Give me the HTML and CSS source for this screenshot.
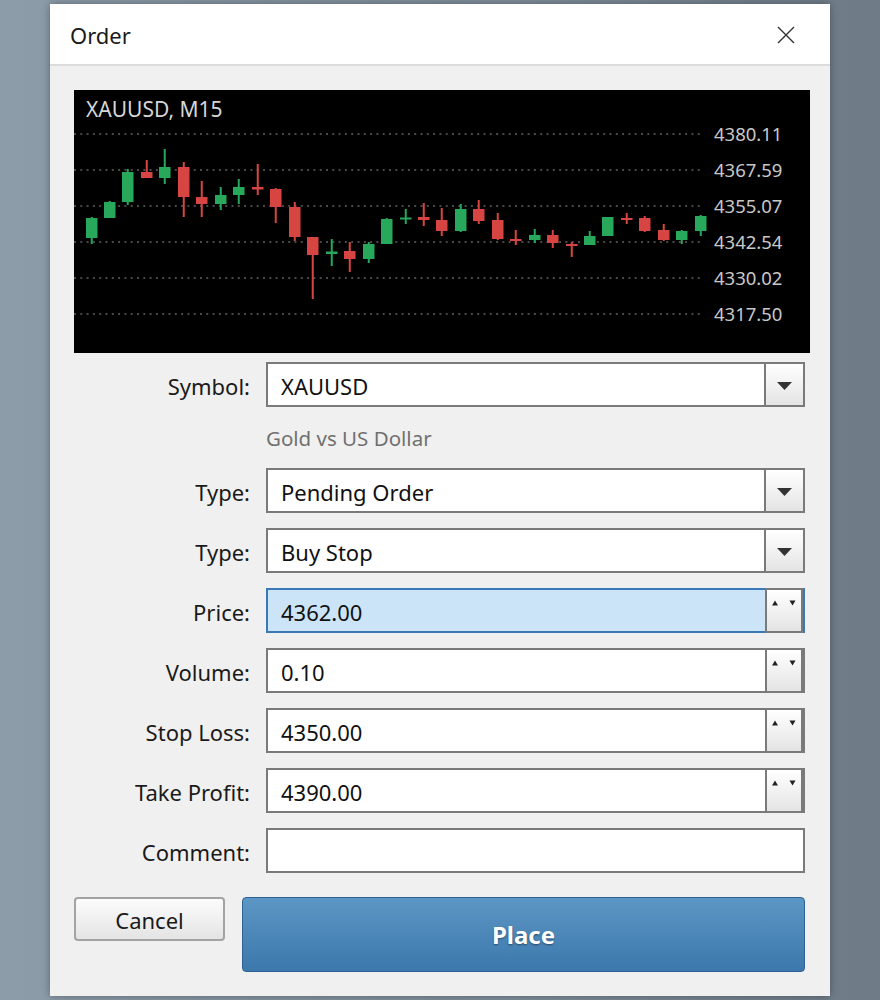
FILE: index.html
```html
<!DOCTYPE html>
<html>
<head>
<meta charset="utf-8">
<title>Order</title>
<link rel="stylesheet" href="styles.css">
</head>
<body>
<div class="dialog">
  <div class="titlebar">
    <span class="title">Order</span>
    <svg class="close" width="18" height="18" viewBox="0 0 18 18"><path d="M1 1L17 17M17 1L1 17" stroke="#333" stroke-width="1.4" fill="none"/></svg>
  </div>
  <div class="content">
    <div class="chart">
      <span class="chart-title">XAUUSD, M15</span>
      <svg class="chart-svg" width="736" height="263" viewBox="0 0 736 263">
        <g class="grid" stroke="#4a4a4a" stroke-width="2" stroke-dasharray="2 4.3">
          <line x1="0" y1="44" x2="628" y2="44"/>
          <line x1="0" y1="80" x2="628" y2="80"/>
          <line x1="0" y1="116" x2="628" y2="116"/>
          <line x1="0" y1="152" x2="628" y2="152"/>
          <line x1="0" y1="188" x2="628" y2="188"/>
          <line x1="0" y1="224" x2="628" y2="224"/>
        </g>
        <g class="labels" fill="#c8c8c8" font-size="18.5">
          <text x="640" y="50.5">4380.11</text>
          <text x="640" y="86.5">4367.59</text>
          <text x="640" y="122.5">4355.07</text>
          <text x="640" y="158.5">4342.54</text>
          <text x="640" y="194.5">4330.02</text>
          <text x="640" y="230.5">4317.50</text>
        </g>
        <g fill="#27a85a">
          <rect x="16.75" y="127" width="2" height="27"/><rect x="12" y="128" width="11.5" height="20"/>
          <rect x="34.75" y="111" width="2" height="17"/><rect x="30" y="112" width="11.5" height="16"/>
          <rect x="52.75" y="79" width="2" height="36"/><rect x="48" y="82" width="11.5" height="30"/>
          <rect x="89.75" y="59" width="2" height="35"/><rect x="85" y="77" width="11.5" height="11"/>
          <rect x="145.75" y="97" width="2" height="23"/><rect x="141" y="105" width="11.5" height="9"/>
          <rect x="163.75" y="89" width="2" height="25"/><rect x="159" y="97" width="11.5" height="8"/>
          <rect x="256.75" y="149" width="2" height="27"/><rect x="252" y="161.5" width="11.5" height="2.5"/>
          <rect x="293.75" y="152" width="2" height="21"/><rect x="289" y="154" width="11.5" height="15"/>
          <rect x="311.75" y="128" width="2" height="26"/><rect x="307" y="129" width="11.5" height="25"/>
          <rect x="330.75" y="119" width="2" height="15"/><rect x="326" y="127.5" width="11.5" height="2"/>
          <rect x="385.75" y="114" width="2" height="28"/><rect x="381" y="119" width="11.5" height="22"/>
          <rect x="459.75" y="139" width="2" height="14"/><rect x="455" y="145" width="11.5" height="5"/>
          <rect x="514.75" y="141" width="2" height="14"/><rect x="510" y="146" width="11.5" height="9"/>
          <rect x="532.75" y="127" width="2" height="19"/><rect x="528" y="127" width="11.5" height="19"/>
          <rect x="606.75" y="140" width="2" height="14"/><rect x="602" y="141" width="11.5" height="9"/>
          <rect x="625.75" y="125" width="2" height="21"/><rect x="621" y="126" width="11.5" height="15"/>
        </g>
        <g fill="#d64541">
          <rect x="71.75" y="70" width="2" height="18"/><rect x="67" y="82" width="11.5" height="6"/>
          <rect x="108.75" y="72" width="2" height="55"/><rect x="104" y="77" width="11.5" height="30"/>
          <rect x="126.75" y="91" width="2" height="36"/><rect x="122" y="107" width="11.5" height="7"/>
          <rect x="182.75" y="74" width="2" height="31"/><rect x="178" y="97" width="11.5" height="2.5"/>
          <rect x="200.75" y="98" width="2" height="35"/><rect x="196" y="99" width="11.5" height="18"/>
          <rect x="219.75" y="112" width="2" height="39"/><rect x="215" y="117" width="11.5" height="30"/>
          <rect x="237.75" y="147" width="2" height="62"/><rect x="233" y="147" width="11.5" height="18"/>
          <rect x="274.75" y="152" width="2" height="30"/><rect x="270" y="161" width="11.5" height="8"/>
          <rect x="348.75" y="113" width="2" height="23"/><rect x="344" y="127" width="11.5" height="3"/>
          <rect x="366.75" y="118" width="2" height="28"/><rect x="362" y="130" width="11.5" height="11"/>
          <rect x="403.75" y="110" width="2" height="24"/><rect x="399" y="119" width="11.5" height="12"/>
          <rect x="422.75" y="123" width="2" height="27"/><rect x="418" y="130" width="11.5" height="19"/>
          <rect x="440.75" y="140" width="2" height="15"/><rect x="436" y="149" width="11.5" height="2"/>
          <rect x="477.75" y="140" width="2" height="18"/><rect x="473" y="145" width="11.5" height="8"/>
          <rect x="496.75" y="152" width="2" height="15"/><rect x="492" y="154" width="11.5" height="2"/>
          <rect x="551.75" y="123" width="2" height="11"/><rect x="547" y="128" width="11.5" height="2"/>
          <rect x="569.75" y="126" width="2" height="16"/><rect x="565" y="128" width="11.5" height="13"/>
          <rect x="588.75" y="134" width="2" height="17"/><rect x="584" y="140" width="11.5" height="10"/>
        </g>
      </svg>
    </div>

    <div class="form">
      <label class="label">Symbol:</label>
      <div class="field"><span class="value">XAUUSD</span><span class="dd"><svg width="15" height="8" viewBox="0 0 15 8"><path d="M0 0H15L7.5 8Z" fill="#333"/></svg></span></div>

      <span class="label"></span>
      <div class="desc">Gold vs US Dollar</div>

      <label class="label">Type:</label>
      <div class="field"><span class="value">Pending Order</span><span class="dd"><svg width="15" height="8" viewBox="0 0 15 8"><path d="M0 0H15L7.5 8Z" fill="#333"/></svg></span></div>

      <label class="label">Type:</label>
      <div class="field"><span class="value">Buy Stop</span><span class="dd"><svg width="15" height="8" viewBox="0 0 15 8"><path d="M0 0H15L7.5 8Z" fill="#333"/></svg></span></div>

      <label class="label">Price:</label>
      <div class="field focused"><span class="value">4362.00</span><span class="spin"><svg width="24" height="6" viewBox="0 0 24 6"><path d="M0 5.5L3 0.5L6 5.5Z M17.5 0.5H23.5L20.5 5.5Z" fill="#222"/></svg></span></div>

      <label class="label">Volume:</label>
      <div class="field"><span class="value">0.10</span><span class="spin"><svg width="24" height="6" viewBox="0 0 24 6"><path d="M0 5.5L3 0.5L6 5.5Z M17.5 0.5H23.5L20.5 5.5Z" fill="#222"/></svg></span></div>

      <label class="label">Stop Loss:</label>
      <div class="field"><span class="value">4350.00</span><span class="spin"><svg width="24" height="6" viewBox="0 0 24 6"><path d="M0 5.5L3 0.5L6 5.5Z M17.5 0.5H23.5L20.5 5.5Z" fill="#222"/></svg></span></div>

      <label class="label">Take Profit:</label>
      <div class="field"><span class="value">4390.00</span><span class="spin"><svg width="24" height="6" viewBox="0 0 24 6"><path d="M0 5.5L3 0.5L6 5.5Z M17.5 0.5H23.5L20.5 5.5Z" fill="#222"/></svg></span></div>

      <label class="label">Comment:</label>
      <div class="field"><span class="value"></span></div>
    </div>

    <div class="actions">
      <button class="btn cancel">Cancel</button>
      <button class="btn place">Place</button>
    </div>
  </div>
</div>
</body>
</html>
```

FILE: styles.css
```css
html, body {
  margin: 0;
  padding: 0;
}
body {
  width: 880px;
  height: 1000px;
  overflow: hidden;
  background: linear-gradient(to right, #8c9ca9 0%, #7f8e9b 60%, #6e7b87 100%);
  font-family: "Noto Sans", "Open Sans", sans-serif;
  color: #1a1a1a;
}
.dialog {
  box-sizing: border-box;
  width: 780px;
  height: 992px;
  margin: 4px 0 0 50px;
  background: #f0f0f0;
  box-shadow: 0 0 8px rgba(0, 0, 0, 0.35);
  display: flex;
  flex-direction: column;
}
.titlebar {
  height: 60px;
  background: #fff;
  border-bottom: 2px solid #dcdcdc;
  display: flex;
  align-items: center;
  justify-content: space-between;
  padding: 0 35px 0 20px;
}
.title {
  font-size: 22px;
  color: #1a1a1a;
  padding-top: 2px;
}
.close {
  display: block;
  margin-top: 2px;
}
.content {
  padding: 24px 25px 24px 24px;
  display: flex;
  flex-direction: column;
}
.chart {
  position: relative;
  width: 736px;
  height: 263px;
  background: #000;
}
.chart-svg {
  display: block;
  font-family: "Noto Sans", "Open Sans", sans-serif;
}
.chart-title {
  position: absolute;
  left: 12px;
  top: 5px;
  font-size: 21px;
  color: #d6d6d6;
}
.form {
  margin-top: 9px;
  display: grid;
  grid-template-columns: 176px 539px;
  column-gap: 16px;
  row-gap: 15px;
}
.label {
  display: flex;
  align-items: center;
  justify-content: flex-end;
  font-size: 22px;
  color: #1a1a1a;
  padding-top: 3px;
}
.desc {
  height: 31px;
  line-height: 33px;
  font-size: 20.5px;
  color: #707070;
}
.field {
  box-sizing: border-box;
  height: 45px;
  border: 2px solid #7a7a7a;
  background: #fff;
  display: flex;
}
.field.focused {
  border-color: #3b79b6;
  background: #cce4f7;
}
.value {
  flex: 1;
  padding: 3px 0 0 13px;
  font-size: 22px;
  line-height: 38px;
  color: #111;
}
.dd {
  box-sizing: border-box;
  width: 39px;
  border-left: 2px solid #7a7a7a;
  background: linear-gradient(#ffffff, #e4e4e4);
  display: flex;
  align-items: center;
  justify-content: center;
  padding-top: 2px;
}
.dd svg {
  display: block;
}
.spin {
  box-sizing: border-box;
  width: 38px;
  margin: -2px 0;
  border: 2px solid #7a7a7a;
  background: linear-gradient(#ffffff, #e4e4e4);
  display: flex;
  justify-content: center;
  padding-top: 10px;
}
.spin svg {
  display: block;
}
.actions {
  margin-top: 24px;
  display: flex;
  align-items: flex-start;
  gap: 17px;
}
.btn {
  font-family: "Noto Sans", "Open Sans", sans-serif;
  margin: 0;
  cursor: pointer;
}
.cancel {
  width: 151px;
  height: 44px;
  border: 2px solid #a3a3a3;
  border-radius: 4px;
  background: linear-gradient(#fcfcfc, #e4e4e4);
  font-size: 22px;
  color: #1a1a1a;
  padding: 2px 0 0;
}
.place {
  flex: 1;
  height: 75px;
  border: 1px solid #2f6192;
  border-radius: 4px;
  background: linear-gradient(#5b96c4, #3d78ad);
  color: #fff;
  font-size: 24px;
  font-weight: bold;
  text-shadow: 0 1px 2px rgba(0, 0, 0, 0.45);
  padding: 0;
}
```
